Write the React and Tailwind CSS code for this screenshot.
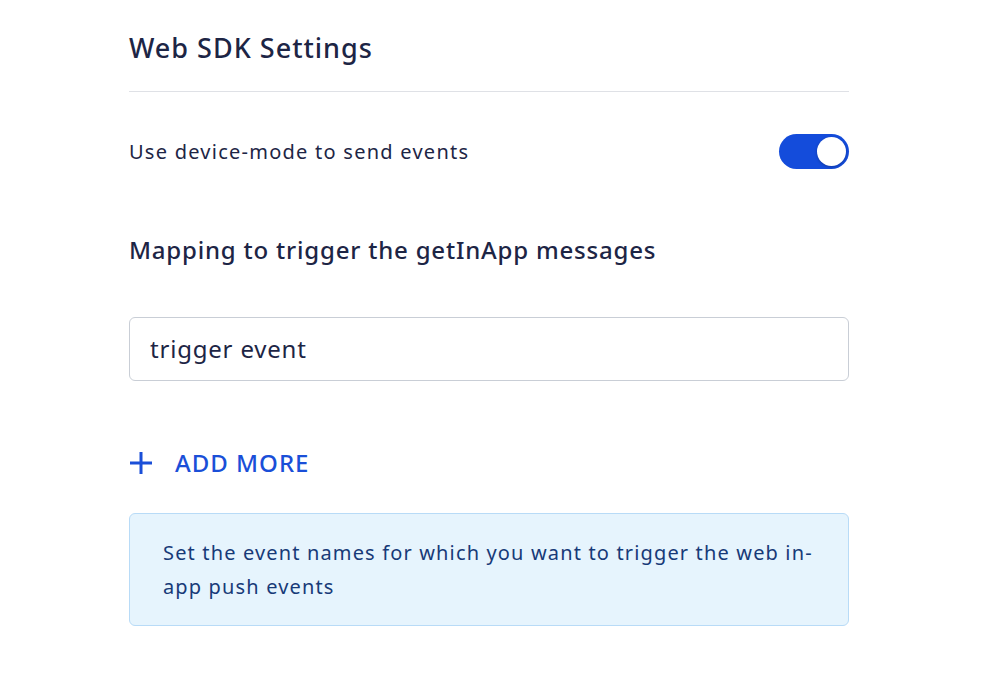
export default function App() {
  return (
    <div className="min-h-screen bg-white" style={{ fontFamily: "'Noto Sans', 'Open Sans', sans-serif" }}>
      <div className="ml-[129px] w-[720px] pt-[28px]">
        <h1 className="text-[27px] leading-[40px] tracking-[1px] text-[#1d2545] font-medium">Web SDK Settings</h1>
        <div className="mt-[23px] h-px bg-[#dfe1e6]" />

        <div className="mt-[42px] flex items-center justify-between">
          <span className="text-[20px] leading-[34px] tracking-[1.25px] text-[#1d2545]">Use device-mode to send events</span>
          <button className="relative h-[35px] w-[70px] rounded-full bg-[#144cdb]">
            <span className="absolute right-[3px] top-[3px] h-[29px] w-[29px] rounded-full bg-white shadow-[0_1px_3px_rgba(0,0,0,0.25)]" />
          </button>
        </div>

        <h2 className="mt-[63px] text-[24px] leading-[36px] tracking-[0.8px] font-medium text-[#1d2545]">
          Mapping to trigger the getInApp messages
        </h2>

        <div className="mt-[49px] flex h-[64px] items-center rounded-[6px] border border-[#c9ced6] px-[20px]">
          <span className="text-[24px] tracking-[0.8px] text-[#1d2545]">trigger event</span>
        </div>

        <button className="mt-[66px] flex items-center gap-[22px] text-[#1a4fd8]">
          <svg width="24" height="24" viewBox="0 0 24 24" fill="none" stroke="currentColor" strokeWidth="3">
            <path d="M12 1v22M1 12h22" />
          </svg>
          <span className="text-[24px] font-medium leading-[32px] tracking-[1px]">ADD MORE</span>
        </button>

        <div className="mt-[34px] rounded-[6px] border border-[#b8dbf7] bg-[#e6f4fd] px-[33px] pt-[22px] pb-[21px]">
          <p className="text-[20px] leading-[34px] tracking-[1.15px] text-[#173a78]">
            Set the event names for which you want to trigger the web in-app push events
          </p>
        </div>
      </div>
    </div>
  );
}
